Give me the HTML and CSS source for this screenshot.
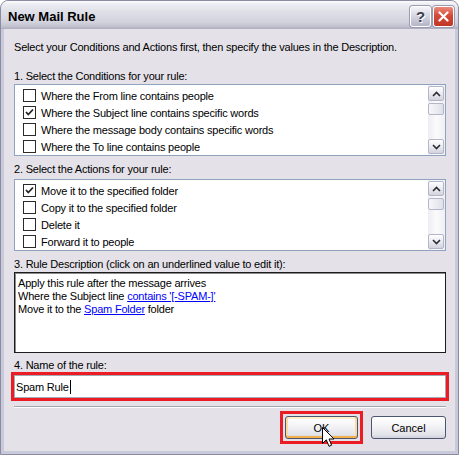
FILE: index.html
```html
<!DOCTYPE html>
<html lang="en">
<head>
    <meta charset="UTF-8">
    <title>New Mail Rule</title>
    <link rel="stylesheet" href="styles.css">
</head>
<body>

    <!-- Dialog window -->
    <div class="window">
        <div class="titlebar">
            <span class="title">New Mail Rule</span>
            <div class="caption-buttons">
                <div class="cap-btn help">?</div>
                <div class="cap-btn close">
                    <svg width="11" height="11" viewBox="0 0 11 11"><path d="M1.5 1.5 L9.5 9.5 M9.5 1.5 L1.5 9.5" stroke="#fff" stroke-width="2.2" stroke-linecap="round"/></svg>
                </div>
            </div>
        </div>

        <div class="client">
            <p class="intro">Select your Conditions and Actions first, then specify the values in the Description.</p>

            <p class="label">1. Select the Conditions for your rule:</p>
            <div class="listbox">
                <ul class="items">
                    <li><span class="check"></span>Where the From line contains people</li>
                    <li><span class="check"><svg width="11" height="11" viewBox="0 0 11 11"><path d="M2 5 L4.3 7.5 L9 2.5" fill="none" stroke="#222" stroke-width="1.8"/></svg></span>Where the Subject line contains specific words</li>
                    <li><span class="check"></span>Where the message body contains specific words</li>
                    <li><span class="check"></span>Where the To line contains people</li>
                </ul>
                <div class="scrollbar">
                    <div class="sb-btn"><svg width="9" height="6" viewBox="0 0 9 6"><path d="M1 5 L4.5 1.5 L8 5" fill="none" stroke="#2b2b33" stroke-width="1.6"/></svg></div>
                    <div class="sb-thumb"></div>
                    <div class="sb-track"></div>
                    <div class="sb-btn"><svg width="9" height="6" viewBox="0 0 9 6"><path d="M1 1 L4.5 4.5 L8 1" fill="none" stroke="#2b2b33" stroke-width="1.6"/></svg></div>
                </div>
            </div>

            <p class="label">2. Select the Actions for your rule:</p>
            <div class="listbox">
                <ul class="items">
                    <li><span class="check"><svg width="11" height="11" viewBox="0 0 11 11"><path d="M2 5 L4.3 7.5 L9 2.5" fill="none" stroke="#222" stroke-width="1.8"/></svg></span>Move it to the specified folder</li>
                    <li><span class="check"></span>Copy it to the specified folder</li>
                    <li><span class="check"></span>Delete it</li>
                    <li><span class="check"></span>Forward it to people</li>
                </ul>
                <div class="scrollbar">
                    <div class="sb-btn"><svg width="9" height="6" viewBox="0 0 9 6"><path d="M1 5 L4.5 1.5 L8 5" fill="none" stroke="#2b2b33" stroke-width="1.6"/></svg></div>
                    <div class="sb-thumb"></div>
                    <div class="sb-track"></div>
                    <div class="sb-btn"><svg width="9" height="6" viewBox="0 0 9 6"><path d="M1 1 L4.5 4.5 L8 1" fill="none" stroke="#2b2b33" stroke-width="1.6"/></svg></div>
                </div>
            </div>

            <p class="label">3. Rule Description (click on an underlined value to edit it):</p>
            <div class="description">
                <p>Apply this rule after the message arrives</p>
                <p>Where the Subject line <a href="#">contains '[-SPAM-]'</a></p>
                <p>Move it to the <a href="#">Spam Folder</a> folder</p>
            </div>

            <p class="label label-name">4. Name of the rule:</p>
            <div class="highlight name-highlight">
                <div class="textbox">Spam Rule<span class="caret"></span></div>
            </div>

            <div class="separator"></div>

            <div class="buttons">
                <div class="highlight ok-highlight">
                    <button class="btn btn-ok">OK</button>
                </div>
                <button class="btn btn-cancel">Cancel</button>
            </div>
        </div>

        <!-- mouse pointer over OK -->
        <svg class="pointer" width="13" height="21" viewBox="0 0 13 21">
            <path d="M0.5 0.5 L0.5 16.5 L4.3 12.8 L7 19.3 L9.6 18.2 L7 12 L12 12 Z" fill="#fff" stroke="#000" stroke-width="1" stroke-linejoin="miter"/>
        </svg>
    </div>

</body>
</html>
```

FILE: styles.css
```css
* {
    margin: 0;
    padding: 0;
    box-sizing: border-box;
}
body {
    background: #fff;
    font-family: "Liberation Sans", Arial, sans-serif;
    font-size: 11px;
    color: #000;
}

/* Window frame */
.window {
    position: relative;
    width: 459px;
    height: 455px;
    border: 1px solid #8b8ca3;
    border-radius: 8px 8px 0 0;
    background: #c9cad9;
    display: flex;
    flex-direction: column;
    overflow: hidden;
}
.titlebar {
    height: 28px;
    flex: none;
    display: flex;
    align-items: center;
    padding: 2px 4px 0 7px;
    background: linear-gradient(to bottom, #fdfdfe 0%, #ececf2 12%, #dfdfe8 40%, #d3d3de 75%, #c3c3d1 90%, #adadbf 100%);
}
.title {
    flex: 1;
    font-size: 13px;
    font-weight: bold;
    color: #000;
}
.caption-buttons {
    display: flex;
    gap: 2px;
}
.cap-btn {
    width: 21px;
    height: 21px;
    border: 1px solid #fff;
    border-radius: 3px;
    display: flex;
    align-items: center;
    justify-content: center;
    box-shadow: 0 0 0 1px #9c9cb0;
}
.help {
    background: linear-gradient(to bottom, #f4f4f8, #d4d4e0 50%, #b4b4c8);
    font-size: 15px;
    font-weight: bold;
    color: #3b3e52;
    text-shadow: 1px 1px 0 #fff;
}
.close {
    background: linear-gradient(to bottom, #ec8a7a, #d5493a 45%, #c13524);
}

/* Client area */
.client {
    flex: 1;
    margin: 0 3px 3px;
    background: #e4e2e8;
    padding: 12px 9px 0 10px;
    display: flex;
    flex-direction: column;
}
.intro, .label {
    line-height: 13px;
    letter-spacing: -0.2px;
}
.intro { margin-bottom: 16px; }
.label { margin-bottom: 1px; }
.listbox + .label { margin-top: 7px; }
.listbox + .label + .listbox { margin-top: 2px; }

/* List boxes */
.listbox {
    height: 72px;
    border: 1px solid #8fa3bf;
    background: #fff;
    display: flex;
}
.items {
    flex: 1;
    list-style: none;
    padding-top: 2px;
}
.items li {
    height: 17px;
    display: flex;
    align-items: center;
    padding-left: 8px;
    letter-spacing: -0.2px;
}
.check {
    width: 13px;
    height: 13px;
    flex: none;
    border: 1px solid #2b2b2b;
    background: #fff;
    margin-right: 5px;
    display: flex;
}
.scrollbar {
    width: 17px;
    padding: 1px 1px 1px 0;
    display: flex;
    flex-direction: column;
    background: linear-gradient(to right, #eeeef3, #fbfbfd 50%, #efeff4);
}
.sb-btn, .sb-thumb {
    border: 1px solid #b3b6c8;
    border-radius: 2px;
    background: linear-gradient(to bottom, #fff, #e6e6ee 60%, #d2d3de);
}
.sb-btn {
    height: 15px;
    display: flex;
    align-items: center;
    justify-content: center;
}
.sb-thumb {
    height: 12px;
    margin-top: 2px;
    background: linear-gradient(to right, #f6f6fa, #e0e0ea);
}
.sb-track { flex: 1; }

/* Rule description */
.description {
    height: 81px;
    border: 1px solid #1c1c1c;
    box-shadow: inset 1px 1px 0 #8c8c8c;
    background: #fff;
    padding: 4px 3px 3px;
    line-height: 13px;
    letter-spacing: -0.2px;
}
.description a {
    color: #0000ff;
    text-decoration: underline;
}

/* Rule name */
.label-name { margin-top: 6px; margin-bottom: 0; }
.highlight {
    border: 3px solid #ec1c24;
}
.name-highlight {
    margin: 0 -3px;
}
.textbox {
    height: 23px;
    border: 1px solid #a5a9b4;
    background: #fff;
    padding-left: 1px;
    display: flex;
    align-items: center;
    font-size: 11px;
    letter-spacing: -0.2px;
}
.caret {
    width: 1px;
    height: 14px;
    background: #000;
    margin-left: 1px;
}
.separator {
    margin-top: 5px;
    height: 2px;
    border-top: 1px solid #a7a6ad;
    border-bottom: 1px solid #fff;
}

/* Buttons */
.buttons {
    margin-top: 3px;
    display: flex;
    justify-content: flex-end;
    align-items: flex-start;
    gap: 8px;
}
.ok-highlight { padding: 2px; }
.btn {
    width: 75px;
    height: 23px;
    border: 1px solid #4b5670;
    border-radius: 3px;
    background: linear-gradient(to bottom, #ffffff, #f3f3f6 45%, #e2e2ea 85%, #cfd0dc);
    font-family: "Liberation Sans", Arial, sans-serif;
    font-size: 11px;
    color: #000;
}
.btn-ok {
    width: 73px;
    display: block;
    box-shadow: inset 0 -2px 0 #f2b14a, inset 2px 0 0 #fbdca0, inset -2px 0 0 #fbdca0, inset 0 2px 0 #fff0cc;
}
.btn-cancel { margin-top: 5px; }

.pointer {
    position: absolute;
    left: 321px;
    top: 426px;
}
```
